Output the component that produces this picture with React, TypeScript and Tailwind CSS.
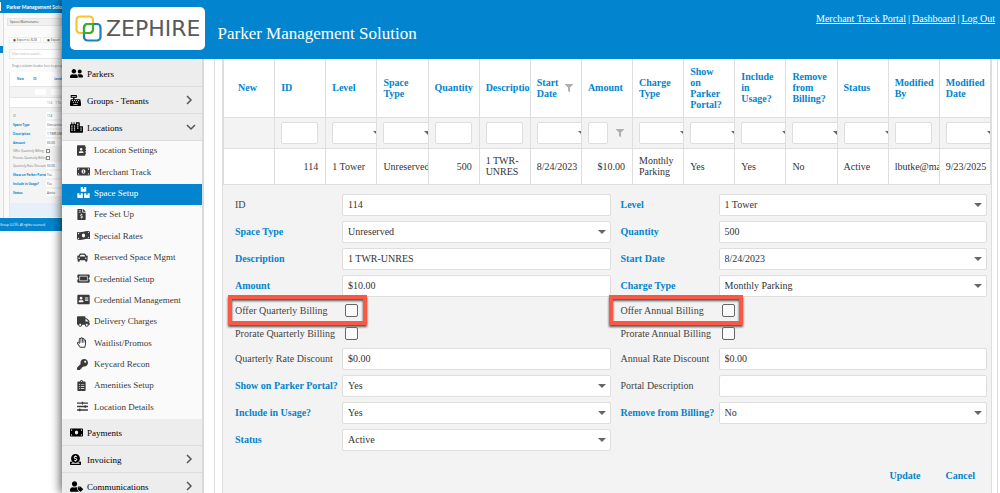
import React, { useState } from "react";
import type { IconType } from "react-icons";
import {
  FaAddressBook,
  FaAddressCard,
  FaBoxes,
  FaCar,
  FaCashRegister,
  FaCity,
  FaClipboardList,
  FaDonate,
  FaFileInvoiceDollar,
  FaFilter,
  FaKey,
  FaMoneyBill,
  FaMoneyBillAlt,
  FaMoneyBillWave,
  FaRegHandPaper,
  FaSlidersH,
  FaTicketAlt,
  FaTruck,
  FaUserFriends,
  FaUserTag,
} from "react-icons/fa";

type NavEntry = { label: string; icon: IconType; size: string; arrow?: "right" | "down" };

const wide = "h-[11px] w-[13px]";
const square = "h-[11px] w-[11px]";
const narrow = "h-[11px] w-[9px]";

const topNav: NavEntry[] = [
  { label: "Parkers", icon: FaUserFriends, size: wide },
  { label: "Groups - Tenants", icon: FaCashRegister, size: square, arrow: "right" },
  { label: "Locations", icon: FaCity, size: wide, arrow: "down" },
];

const locationNav: NavEntry[] = [
  { label: "Location Settings", icon: FaAddressBook, size: narrow },
  { label: "Merchant Track", icon: FaMoneyBillAlt, size: wide },
  { label: "Space Setup", icon: FaBoxes, size: wide },
  { label: "Fee Set Up", icon: FaFileInvoiceDollar, size: narrow },
  { label: "Special Rates", icon: FaMoneyBillWave, size: wide },
  { label: "Reserved Space Mgmt", icon: FaCar, size: square },
  { label: "Credential Setup", icon: FaTicketAlt, size: wide },
  { label: "Credential Management", icon: FaAddressCard, size: wide },
  { label: "Delivery Charges", icon: FaTruck, size: wide },
  { label: "Waitlist/Promos", icon: FaRegHandPaper, size: narrow },
  { label: "Keycard Recon", icon: FaKey, size: square },
  { label: "Amenities Setup", icon: FaClipboardList, size: narrow },
  { label: "Location Details", icon: FaSlidersH, size: square },
];

const bottomNav: NavEntry[] = [
  { label: "Payments", icon: FaMoneyBill, size: wide },
  { label: "Invoicing", icon: FaDonate, size: square, arrow: "right" },
  { label: "Communications", icon: FaUserTag, size: wide, arrow: "right" },
];

function Chevron({ down }: { down?: boolean }) {
  return (
    <svg
      viewBox="0 0 10 10"
      className={down ? "mr-[6px] h-[10px] w-[10px] rotate-90" : "mr-[8px] h-[10px] w-[10px]"}
      fill="none"
      stroke="#555"
      strokeWidth="1.5"
      aria-hidden="true"
    >
      <path d="M3 1l4 4-4 4" />
    </svg>
  );
}

function Logo() {
  return (
    <div className="flex h-[43px] items-center gap-[4px] rounded-[5px] bg-white px-[5px]">
      <svg viewBox="0 0 27 27" className="h-[27px] w-[27px]" fill="none" strokeWidth="2.2" aria-hidden="true">
        <rect x="1.5" y="1.5" width="16.5" height="16.5" rx="3.5" stroke="#fcc32c" />
        <rect x="9" y="9" width="16.5" height="16.5" rx="3.5" stroke="#1a7fc4" />
        <path d="M9 18V12.500a3.500 3.500 0 0 1 3.500-3.500H18v5.500a3.500 3.500 0 0 1-3.500 3.500z" stroke="#3dae2b" />
      </svg>
      <span className="font-['DejaVu_Sans',sans-serif] text-[22px] leading-[24px] text-[#58595b]">ZEPHIRE</span>
    </div>
  );
}

function TopItem({ item }: { item: NavEntry }) {
  const Icon = item.icon;
  return (
    <li className="border-b border-[#dcdcdc] bg-[#ededed]">
      <a href="#" className="flex h-[26px] items-center text-[9px] leading-[12px] text-black">
        <span className="ml-[8px] flex w-[17px] items-center">
          <Icon className={item.size} />
        </span>
        <span className="flex-1 pt-[2px]">{item.label}</span>
        {item.arrow && <Chevron down={item.arrow === "down"} />}
      </a>
    </li>
  );
}

function Sidebar() {
  return (
    <nav className="w-[142px] shrink-0 border-r-2 border-[#dadada] bg-[#fafafa] pt-px">
      <ul>
        {topNav.map((i) => (
          <TopItem key={i.label} item={i} />
        ))}
        <li>
          <ul className="flex h-[278px] flex-col">
            {locationNav.map((i) => {
              const Icon = i.icon;
              const on = i.label === "Space Setup";
              return (
                <li key={i.label} className={on ? "flex flex-1 bg-[#0285ce] text-white" : "flex flex-1 text-[#3a3a3a]"}>
                  <a href="#" className="flex flex-1 items-center pb-[3px] text-[9px] leading-[12px]">
                    <span className="ml-[15px] flex w-[17px] items-center">
                      <Icon className={i.size} />
                    </span>
                    <span>{i.label}</span>
                  </a>
                </li>
              );
            })}
          </ul>
        </li>
        {bottomNav.map((i) => (
          <TopItem key={i.label} item={i} />
        ))}
      </ul>
    </nav>
  );
}

type Column = {
  title: string;
  value: string;
  filter?: "text" | "select" | "funnel";
  right?: boolean;
  funnel?: boolean;
  wrap?: boolean;
};

const columns: Column[] = [
  { title: "New", value: "" },
  { title: "ID", value: "114", filter: "text", right: true },
  { title: "Level", value: "1 Tower", filter: "select" },
  { title: "Space Type", value: "Unreserved", filter: "select" },
  { title: "Quantity", value: "500", filter: "text", right: true },
  { title: "Description", value: "1 TWR-UNRES", filter: "text", wrap: true },
  { title: "Start Date", value: "8/24/2023", filter: "select", funnel: true },
  { title: "Amount", value: "$10.00", filter: "funnel", right: true },
  { title: "Charge Type", value: "Monthly Parking", filter: "select", wrap: true },
  { title: "Show on Parker Portal?", value: "Yes", filter: "select" },
  { title: "Include in Usage?", value: "Yes", filter: "select" },
  { title: "Remove from Billing?", value: "No", filter: "select" },
  { title: "Status", value: "Active", filter: "select" },
  { title: "Modified By", value: "lbutke@ma", filter: "text" },
  { title: "Modified Date", value: "9/23/2025", filter: "select" },
];

function Funnel() {
  return <FaFilter className="h-[8px] w-[8px] shrink-0 text-[#b0b0b0]" aria-hidden="true" />;
}

function Caret() {
  return (
    <svg viewBox="0 0 8 4" className="pointer-events-none absolute top-1/2 right-[5px] h-[4px] w-[8px] -translate-y-1/2" aria-hidden="true">
      <path d="M0 0h8L4 4z" fill="#666" />
    </svg>
  );
}

const filterBox = "block h-[22px] rounded-[2px] border border-[#dedede] bg-white text-[10px]";

function FilterCell({ column }: { column: Column }) {
  const label = `Filter ${column.title}`;
  if (column.filter === "text") return <input aria-label={label} className={`${filterBox} w-[37px]`} />;
  if (column.filter === "select")
    return (
      <div className="relative w-[54px]">
        <select aria-label={label} className={`${filterBox} w-full appearance-none`}>
          <option></option>
        </select>
        <Caret />
      </div>
    );
  if (column.filter === "funnel")
    return (
      <div className="flex items-center gap-[8px]">
        <input aria-label={label} className={`${filterBox} w-[20px]`} />
        <Funnel />
      </div>
    );
  return null;
}

function SpaceTable() {
  return (
    <table className="w-full table-fixed border-collapse text-[10px] leading-[11px]">
      <thead>
        <tr className="h-[58px]">
          {columns.map((c) => (
            <th
              key={c.title}
              scope="col"
              className={`overflow-hidden border-x border-b border-[#dedede] font-bold text-[#0285ce] ${
                c.title === "New" ? "pr-[3px] text-center" : "pr-[9px] pl-[6px] text-left"
              }`}
            >
              {c.funnel ? (
                <div className="flex items-center gap-[6px]">
                  <span className="w-[22px] shrink-0">{c.title}</span>
                  <Funnel />
                </div>
              ) : (
                c.title
              )}
            </th>
          ))}
        </tr>
        <tr className="h-[31px] bg-[#f3f3f3]">
          {columns.map((c) => (
            <td key={c.title} className="overflow-hidden border border-[#dedede] p-0 pl-[6px]">
              <FilterCell column={c} />
            </td>
          ))}
        </tr>
      </thead>
      <tbody>
        <tr className="h-[36px] text-[#333]">
          {columns.map((c) => (
            <td
              key={c.title}
              className={`overflow-hidden border border-[#dedede] pl-[6px] ${c.right ? "pr-[7px] text-right" : ""} ${
                c.wrap ? "" : "whitespace-nowrap"
              }`}
            >
              {c.value}
            </td>
          ))}
        </tr>
      </tbody>
    </table>
  );
}

type FieldDef = { id: string; label: string; value: string; kind?: "select" | "date"; required?: boolean };

const upperFields: FieldDef[] = [
  { id: "id", label: "ID", value: "114" },
  { id: "level", label: "Level", value: "1 Tower", kind: "select", required: true },
  { id: "space-type", label: "Space Type", value: "Unreserved", kind: "select", required: true },
  { id: "quantity", label: "Quantity", value: "500", required: true },
  { id: "description", label: "Description", value: "1 TWR-UNRES", required: true },
  { id: "start-date", label: "Start Date", value: "8/24/2023", kind: "date", required: true },
  { id: "amount", label: "Amount", value: "$10.00", required: true },
  { id: "charge-type", label: "Charge Type", value: "Monthly Parking", kind: "select", required: true },
];

const lowerFields: FieldDef[] = [
  { id: "quarterly-discount", label: "Quarterly Rate Discount", value: "$0.00" },
  { id: "annual-discount", label: "Annual Rate Discount", value: "$0.00" },
  { id: "show-portal", label: "Show on Parker Portal?", value: "Yes", kind: "select", required: true },
  { id: "portal-description", label: "Portal Description", value: "" },
  { id: "include-usage", label: "Include in Usage?", value: "Yes", kind: "select", required: true },
  { id: "remove-billing", label: "Remove from Billing?", value: "No", kind: "select", required: true },
  { id: "status", label: "Status", value: "Active", kind: "select", required: true },
];

const formGrid = "grid grid-cols-[107px_1fr_108px_1fr]";
const fieldBox = "h-[22px] w-full rounded-[2px] border border-[#dedede] bg-white px-[5px] text-[10px] leading-[12px] text-[#333]";

function Fields({ fields }: { fields: FieldDef[] }) {
  return (
    <div className={`${formGrid} items-center gap-y-[5px]`}>
      {fields.map((f, i) => (
        <React.Fragment key={f.id}>
          <label
            htmlFor={f.id}
            className={`whitespace-nowrap ${i % 2 ? "pl-[10px]" : ""} ${f.required ? "font-bold text-[#0285ce]" : "text-[#444]"}`}
          >
            {f.label}
          </label>
          <div className="relative flex">
            {f.kind === "select" ? (
              <select id={f.id} className={`${fieldBox} appearance-none`}>
                <option>{f.value}</option>
              </select>
            ) : (
              <input id={f.id} defaultValue={f.value} className={fieldBox} />
            )}
            {f.kind && <Caret />}
          </div>
        </React.Fragment>
      ))}
    </div>
  );
}

function Check({ id, label, second, marked }: { id: string; label: string; second?: boolean; marked?: boolean }) {
  const [on, setOn] = useState(false);
  return (
    <div className={`col-span-2 flex h-[22px] ${second ? "pl-[10px]" : ""}`}>
      <div className="relative flex items-center">
        <label htmlFor={id} className={`whitespace-nowrap text-[#444] ${second ? "w-[101px]" : "w-[110px]"}`}>
          {label}
        </label>
        <input
          id={id}
          type="checkbox"
          checked={on}
          onChange={(e) => setOn(e.target.checked)}
          className="h-[13px] w-[13px] appearance-none rounded-[2px] border border-[#666] bg-[#fafafa] checked:bg-[#0285ce]"
        />
        {marked && (
          <div
            className={`pointer-events-none absolute -top-[5px] -bottom-[3px] border-4 border-[#fa5845] drop-shadow-[0_2px_1px_rgba(0,0,0,0.65)] ${
              second ? "-right-[8px] -left-[12px]" : "-right-[9px] -left-[7px]"
            }`}
          />
        )}
      </div>
    </div>
  );
}

function EditForm() {
  return (
    <form className="pt-[9px] pr-[4px] pl-[12px] text-[10px] leading-[12px]" onSubmit={(e) => e.preventDefault()}>
      <Fields fields={upperFields} />
      <div className={`${formGrid} gap-y-px py-[3px]`}>
        <Check id="offer-quarterly" label="Offer Quarterly Billing" marked />
        <Check id="offer-annual" label="Offer Annual Billing" second marked />
        <Check id="prorate-quarterly" label="Prorate Quarterly Billing" />
        <Check id="prorate-annual" label="Prorate Annual Billing" second />
      </div>
      <Fields fields={lowerFields} />
      <div className="flex justify-end gap-[25px] pt-[19px] pr-[12px] pb-4 font-bold text-[#0285ce]">
        <button type="submit">Update</button>
        <button type="button">Cancel</button>
      </div>
    </form>
  );
}

const backRows = [
  { label: "ID", value: "114" },
  { label: "Space Type", value: "Unreserved", blue: true },
  { label: "Description", value: "1 TWR-UNR", blue: true },
  { label: "Amount", value: "$0.00", blue: true },
  { label: "Offer Quarterly Billing", check: true },
  { label: "Prorate Quarterly Billing", check: true },
  { label: "Quarterly Rate Discount", value: "$0.00" },
  { label: "Show on Parker Portal?", value: "Yes", blue: true },
  { label: "Include in Usage?", value: "Yes", blue: true },
  { label: "Status", value: "Active", blue: true },
];

function BackPage() {
  return (
    <div
      className="w-[62px] shrink-0 overflow-hidden bg-white font-['Open_Sans',sans-serif] text-[3px] leading-[4px] whitespace-nowrap text-[#777]"
      aria-hidden="true"
    >
      <div className="flex h-[13px] items-center bg-[#0285ce] font-['Lato',sans-serif] text-[5px] leading-[6px] font-bold text-white">
        <span className="mr-[6px] h-[9px] w-[2px] bg-white" />
        Parker Management Solu
      </div>
      <div className="flex h-[205px]">
        <div className="w-[4px] shrink-0 border-r border-[#ddd] bg-[#f7f7f7] pt-[33px]">
          <div className="h-[7px] bg-[#0285ce]" />
        </div>
        <div className="w-[58px] bg-[#fafafa] pt-[5px] pl-[3px]">
          <div className="h-[8px] border border-[#e4e4e4] bg-[#f0f0f0] pt-px pl-[2px] text-[#444]">Spaces Maintenance</div>
          <div className="mt-[9px] flex h-[9px] items-center gap-[2px] pl-[2px] text-[#444]">
            <span className="border border-[#eee] bg-white px-[3px]">▣ Export to XLSX</span>
            <span className="border border-[#eee] bg-white px-[3px]">▣ Export</span>
          </div>
          <div className="mt-[5px] ml-[2px] flex h-[10px] items-center border border-[#e8e8e8] bg-white pl-[2px] text-[#aaa]">Enter text to search...</div>
          <div className="mt-[5px] ml-[5px]">Drag a column header here to group by</div>
          <div className="mt-[4px] ml-[2px] border-l border-[#e5e5e5] bg-[#f4f4f4]">
            <div className="flex h-[15px] items-center border-b border-[#e5e5e5] bg-white font-bold text-[#0285ce]">
              <span className="w-[17px] pl-[7px]">New</span>
              <span className="w-[22px] pl-[7px]">ID</span>
              <span className="pl-[7px]">Level</span>
            </div>
            <div className="flex h-[10px] items-center gap-[5px] pl-[25px]">
              <span className="h-[6px] w-[17px] bg-white" />
              <span className="h-[6px] w-[17px] bg-white" />
            </div>
            <div className="flex h-[11px] items-center gap-[3px] border-y border-[#e5e5e5] bg-white pl-[37px]">
              <span>114</span>
              <span>1 To</span>
            </div>
            <div className="flex h-[90px] flex-col pt-[3px] pl-[3px]">
              {backRows.map((r) => (
                <div key={r.label} className={`flex items-center ${r.check ? "h-[7px]" : "h-[9px]"}`}>
                  <span className={`w-[33px] shrink-0 ${r.blue ? "font-bold text-[#0285ce]" : ""}`}>{r.label}</span>
                  {r.check ? (
                    <span className="h-[4px] w-[4px] border border-[#888] bg-white" />
                  ) : (
                    <span className="flex h-[7px] w-[60px] items-center bg-white pl-px text-[#444]">{r.value}</span>
                  )}
                </div>
              ))}
            </div>
            <div className="mt-[5px] h-[14px] bg-[#e6f0fa]" />
          </div>
        </div>
      </div>
      <div className="flex h-[13px] items-center bg-[#0285ce] text-white">Group LLC®). All rights reserved.</div>
    </div>
  );
}

export default function App() {
  return (
    <div className="flex h-screen overflow-hidden bg-white font-['Liberation_Serif',serif]">
      <BackPage />
      <div className="relative flex min-w-0 flex-1 flex-col shadow-[-2px_0_9px_rgba(0,0,0,0.6)]">
        <header className="flex h-[59px] shrink-0 items-start bg-[#0285ce] pt-[7px] pr-[5px] pl-[8px] text-white">
          <Logo />
          <h1 className="ml-[12px] flex-1 pt-[17px] text-[17px] leading-[20px]">Parker Management Solution</h1>
          <div className="flex gap-[2px] pt-[6px] text-[10px] leading-[12px]">
            <a href="#" className="underline">Merchant Track Portal</a>
            <span>|</span>
            <a href="#" className="underline">Dashboard</a>
            <span>|</span>
            <a href="#" className="underline">Log Out</a>
          </div>
        </header>
        <div className="flex min-h-0 flex-1 bg-white">
          <Sidebar />
          <main className="min-w-0 flex-1 pr-[2px] pl-[10px]">
            <div className="h-full border-x border-[#dedede] pr-[5px] pl-[7px]">
              <section className="h-full border-x border-[#dedede] bg-[#f3f3f3]">
                <div className="bg-white">
                  <SpaceTable />
                </div>
                <EditForm />
              </section>
            </div>
          </main>
        </div>
      </div>
    </div>
  );
}
